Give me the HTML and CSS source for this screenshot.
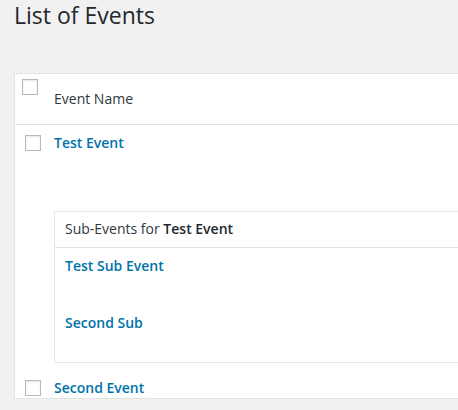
FILE: index.html
```html
<!DOCTYPE html>
<html>
<head>
<meta charset="utf-8">
<link rel="stylesheet" href="styles.css">
</head>
<body>
<h1 class="title">List of Events</h1>
<div class="table">
  <div class="thead">
    <div class="check-col"><span class="cb cb-head"></span></div>
    <div class="name-col head-name">Event Name</div>
  </div>
  <div class="row row-first">
    <div class="check-col"><span class="cb"></span></div>
    <div class="name-col">
      <a class="link">Test Event</a>
      <div class="sub">
        <div class="sub-head">Sub-Events for <strong>Test Event</strong></div>
        <div class="sub-row"><a class="link">Test Sub Event</a></div>
        <div class="sub-row"><a class="link">Second Sub</a></div>
      </div>
    </div>
  </div>
  <div class="row">
    <div class="check-col"><span class="cb"></span></div>
    <div class="name-col"><a class="link">Second Event</a></div>
  </div>
</div>
</body>
</html>
```
FILE: styles.css
```css
html, body {
  margin: 0;
  padding: 0;
  background: #f1f1f1;
  font-family: "Open Sans", "Liberation Sans", sans-serif;
  color: #32373c;
  font-size: 14px;
  line-height: 20px;
  overflow: hidden;
}
.title {
  margin: 0;
  padding: 0 0 0 14px;
  font-size: 23px;
  font-weight: 400;
  line-height: 31px;
  color: #23282d;
}
.table {
  margin: 42px 0 0 14px;
  width: 700px;
  background: #fff;
  border: 1px solid #e5e5e5;
  box-shadow: 0 1px 1px rgba(0,0,0,.04);
}
.thead {
  display: flex;
  height: 50px;
  border-bottom: 1px solid #e1e1e1;
}
.thead .check-col {
  padding: 5px 0 0 7px;
  width: 32px;
}
.head-name {
  padding-top: 15px;
}
.row {
  display: flex;
  padding: 8px 0 0 0;
}
.row-first {
  padding-bottom: 7px;
}
.row .check-col {
  width: 29px;
  padding: 2px 0 0 10px;
}
.cb {
  display: block;
  box-sizing: border-box;
  width: 16px;
  height: 16px;
  border: 1px solid #b4b9be;
  background: #fff;
  box-shadow: inset 0 1px 2px rgba(0,0,0,.1);
}
.name-col {
  flex: 1;
}
.link {
  display: block;
  color: #0073aa;
  font-weight: 600;
  text-decoration: none;
}
.sub {
  margin-top: 58px;
  border: 1px solid #e5e5e5;
  background: #fff;
}
.sub-head {
  padding: 7px 10px 8px;
  border-bottom: 1px solid #e1e1e1;
  color: #32373c;
}
.sub-head strong {
  font-weight: 600;
  color: #23282d;
}
.sub-row {
  padding: 8px 10px 29px;
}
```
